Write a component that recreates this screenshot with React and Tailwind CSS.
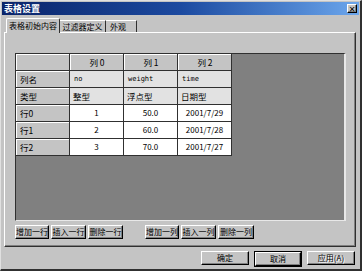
import React from 'react';

const font = { fontFamily: '"Noto Sans CJK SC", "DejaVu Sans", sans-serif' };

const btn =
  'flex items-center justify-center whitespace-nowrap bg-[#c4c4c4] border border-t-white border-l-white border-r-black border-b-black shadow-[inset_-1px_-1px_#808080] text-[8px] leading-none text-black';

const Button = ({ w, children, className = '' }) => (
  <div className={`${btn} ${w} h-[14px] ${className}`}>{children}</div>
);

const columns = ['列 0', '列 1', '列 2'];
const rows = [
  { head: '行0', cells: ['1', '50.0', '2001/7/29'] },
  { head: '行1', cells: ['2', '60.0', '2001/7/28'] },
  { head: '行2', cells: ['3', '70.0', '2001/7/27'] },
];

const headCell =
  'bg-[#c4c4c4] border-t border-l border-t-white border-l-white flex items-center whitespace-nowrap text-[8.5px] leading-none';

const Grid = () => (
  <div className="grid grid-cols-[53px_53px_53px_53px] auto-rows-[16px] gap-px bg-[#303030] w-fit pr-px pb-px">
    <div className={headCell} />
    {columns.map((c) => (
      <div key={c} className={`${headCell} justify-center`}>{c}</div>
    ))}

    <div className={`${headCell} bg-[#b8b8b8] pl-[3px]`}>列名</div>
    {['no', 'weight', 'time'].map((t) => (
      <div key={t} className="bg-[#e2e2e2] flex items-center pl-[4px] text-[7px] leading-none" style={{ fontFamily: '"DejaVu Sans Mono", monospace' }}>
        {t}
      </div>
    ))}

    <div className={`${headCell} bg-[#b8b8b8] pl-[3px]`}>类型</div>
    {['整型', '浮点型', '日期型'].map((t) => (
      <div key={t} className="bg-[#e2e2e2] flex items-center pl-[3px] text-[8.5px] leading-none whitespace-nowrap">{t}</div>
    ))}

    {rows.map((r) => (
      <React.Fragment key={r.head}>
        <div className={`${headCell} bg-[#b8b8b8] pl-[3px]`}>{r.head}</div>
        {r.cells.map((c, i) => (
          <div key={i} className="bg-white flex items-center justify-center text-[8px] leading-none">{c}</div>
        ))}
      </React.Fragment>
    ))}
  </div>
);

export default function App() {
  return (
    <div
      className="w-[362px] h-[271px] bg-[#c4c4c4] flex flex-col border-t border-l border-t-[#e0e0e0] border-l-[#e0e0e0] border-r-2 border-b-2 border-r-[#303030] border-b-[#303030] overflow-hidden text-black"
      style={font}
    >
      {/* title bar */}
      <div className="h-[13px] mx-px mt-px flex items-center justify-between bg-gradient-to-r from-[#0a246a] via-[#1c4aa0] to-[#6ca6ec] pl-[2px] pr-[2px]">
        <span className="text-white font-bold text-[9px] leading-none">表格设置</span>
        <div className={`${btn} w-[10px] h-[9px] text-[7px] font-bold`}>✕</div>
      </div>

      <div className="flex flex-col px-[3px] pt-[3px]">
        {/* tabs */}
        <div className="flex items-end h-[14px] pl-[2px] relative z-10">
          <div className="h-[15px] w-[54px] bg-[#c4c4c4] border-t border-l border-r border-t-white border-l-white border-r-[#303030] rounded-t-[2px] flex items-center justify-center text-[8px] leading-none whitespace-nowrap -mb-px">
            表格初始内容
          </div>
          <div className="h-[12px] w-[46px] border-t border-r border-t-white border-r-[#303030] flex items-center justify-center text-[8px] leading-none whitespace-nowrap">
            过滤器定义
          </div>
          <div className="h-[12px] w-[31px] border-t border-r border-t-white border-r-[#303030] flex items-center pl-[4px] text-[8px] leading-none whitespace-nowrap">
            外观
          </div>
        </div>

        {/* panel */}
        <div className="h-[215px] w-[352px] border border-t-white border-l-white border-r-[#303030] border-b-[#303030] shadow-[inset_-1px_-1px_#808080] flex flex-col pl-[10px] pt-[20px]">
          <div className="w-[331px] h-[168px] bg-[#808080] border-t border-l border-t-[#303030] border-l-[#303030] border-r-2 border-b border-r-[#e8e8e8] border-b-[#e8e8e8]">
            <Grid />
          </div>
          <div className="flex mt-[4px] gap-[2px]">
            <Button w="w-[34px]">增加一行</Button>
            <Button w="w-[35px]">插入一行</Button>
            <Button w="w-[35px]">删除一行</Button>
            <Button w="w-[34px]" className="ml-[20px]">增加一列</Button>
            <Button w="w-[35px]">插入一列</Button>
            <Button w="w-[36px]">删除一列</Button>
          </div>
        </div>

        {/* footer */}
        <div className="flex justify-end gap-[5px] mt-[4px] pr-[2px]">
          <Button w="w-[48px]">确定</Button>
          <div className="border border-black">
            <Button w="w-[46px]" className="h-[12px]">取消</Button>
          </div>
          <Button w="w-[48px]" className="text-[#9a9a9a] [text-shadow:1px_1px_#ffffff]">应用(A)</Button>
        </div>
      </div>
    </div>
  );
}
